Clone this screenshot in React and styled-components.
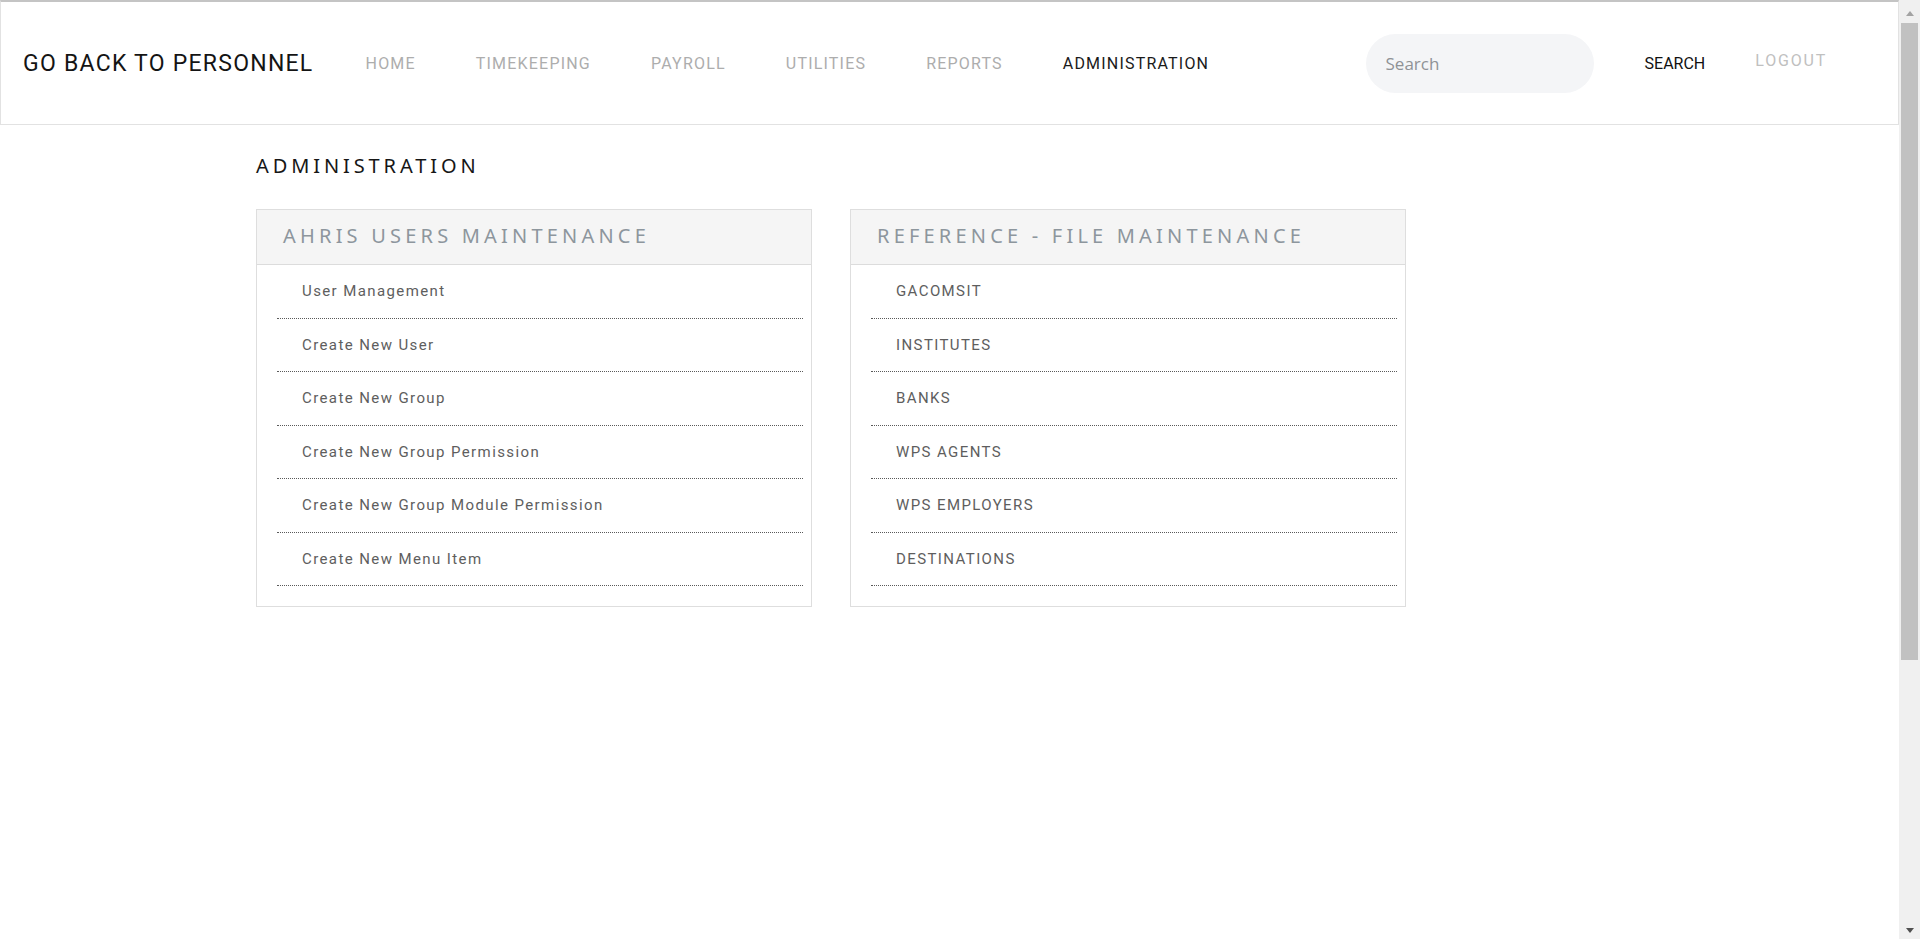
import React from "react";
import styled, { createGlobalStyle } from "styled-components";

const GlobalStyle = createGlobalStyle`
  html, body { background: #fff; }
  body {
    margin: 0;
    font-family: Roboto, "Liberation Sans", sans-serif;
    overflow: hidden;
  }
`;

const Frame = styled.div`
  display: grid;
  grid-template-columns: 1fr 21px;
  height: 100vh;
`;

const Page = styled.div`
  min-width: 0;
  overflow: hidden;
`;

/* window scrollbar drawing */
const ScrollBar = styled.div`
  display: flex;
  flex-direction: column;
  background: #f0f0f0;
`;

const ArrowButton = styled.div`
  height: ${(p) => p.$h}px;
  display: flex;
  justify-content: center;
  align-items: ${(p) => (p.$down ? "flex-end" : "flex-start")};
  padding-top: ${(p) => (p.$down ? 0 : 11)}px;
  padding-bottom: ${(p) => (p.$down ? 6 : 0)}px;
  box-sizing: border-box;
`;

const Triangle = styled.span`
  width: 0;
  height: 0;
  border-left: 4.5px solid transparent;
  border-right: 4.5px solid transparent;
  ${(p) =>
    p.$down
      ? `border-top: 5px solid ${p.$color};`
      : `border-bottom: 5px solid ${p.$color};`}
`;

const Thumb = styled.div`
  height: 637px;
  margin: 0 2px;
  background: #c1c1c1;
`;

const Track = styled.div`
  flex: 1;
`;

const Header = styled.header`
  display: flex;
  align-items: center;
  height: 122px;
  padding: 0 0 0 22px;
  border: 1px solid #e2e2e2;
  border-top: 2px solid #c4c4c4;
`;

const Brand = styled.a`
  font-size: 23px;
  letter-spacing: 1.25px;
  color: #141414;
  margin-right: 52px;
  white-space: nowrap;
`;

const Nav = styled.nav`
  display: flex;
  gap: 60px;
`;

const NavItem = styled.a`
  font-size: 16px;
  letter-spacing: 1.2px;
  color: ${(p) => (p.$active ? "#1a1a1a" : "#adadad")};
  white-space: nowrap;
`;

const SearchArea = styled.div`
  display: flex;
  align-items: center;
  margin-left: auto;
  margin-right: 71px;
`;

const SearchInput = styled.input`
  width: 228px;
  height: 59px;
  box-sizing: border-box;
  border: none;
  border-radius: 30px;
  background: #f4f5f7;
  padding: 0 20px;
  font-family: "Open Sans", "Noto Sans", sans-serif;
  font-size: 17px;
  color: #333;
  outline: none;
  &::placeholder { color: #8f9296; }
`;

const SearchButton = styled.a`
  margin-left: 51px;
  font-size: 16px;
  color: #111;
`;

const Logout = styled.a`
  margin-left: 50px;
  margin-bottom: 6px;
  font-size: 16px;
  letter-spacing: 1.8px;
  color: #c0c0c0;
`;

const Main = styled.main`
  padding: 26px 0 0 256px;
`;

const PageTitle = styled.h1`
  margin: 0 0 28px;
  font-family: "Noto Sans", sans-serif;
  font-weight: 400;
  font-size: 20px;
  line-height: 30px;
  letter-spacing: 3.9px;
  color: #161616;
`;

const Panels = styled.div`
  display: flex;
  gap: 38px;
  align-items: flex-start;
`;

const Panel = styled.section`
  width: 556px;
  box-sizing: border-box;
  border: 1px solid #dedede;
`;

const PanelHeader = styled.h2`
  margin: 0;
  height: 55px;
  box-sizing: border-box;
  display: flex;
  align-items: center;
  padding: 0 0 3px 26px;
  background: #f5f5f5;
  border-bottom: 1px solid #dcdcdc;
  font-family: "Noto Sans", sans-serif;
  font-weight: 400;
  font-size: 20px;
  letter-spacing: 4.2px;
  color: #8d969d;
`;

const PanelBody = styled.ul`
  list-style: none;
  margin: 0;
  padding: 0 8px 20px 20px;
`;

const Row = styled.li`
  height: 52.5px;
  display: flex;
  align-items: center;
  padding-left: 25px;
  border-bottom: 1px dotted #5a5a5a;
  font-size: 15px;
  letter-spacing: 1.4px;
  color: #5e5e5e;
`;

const admin = [
  "User Management",
  "Create New User",
  "Create New Group",
  "Create New Group Permission",
  "Create New Group Module Permission",
  "Create New Menu Item",
];

const refs = ["GACOMSIT", "INSTITUTES", "BANKS", "WPS AGENTS", "WPS EMPLOYERS", "DESTINATIONS"];

const navItems = ["HOME", "TIMEKEEPING", "PAYROLL", "UTILITIES", "REPORTS", "ADMINISTRATION"];

export default function App() {
  return (
    <>
      <GlobalStyle />
      <Frame>
        <Page>
          <Header>
            <Brand>GO BACK TO PERSONNEL</Brand>
            <Nav>
              {navItems.map((n) => (
                <NavItem key={n} $active={n === "ADMINISTRATION"}>
                  {n}
                </NavItem>
              ))}
            </Nav>
            <SearchArea>
              <SearchInput placeholder="Search" />
              <SearchButton>SEARCH</SearchButton>
              <Logout>LOGOUT</Logout>
            </SearchArea>
          </Header>
          <Main>
            <PageTitle>ADMINISTRATION</PageTitle>
            <Panels>
              <Panel>
                <PanelHeader>AHRIS USERS MAINTENANCE</PanelHeader>
                <PanelBody>
                  {admin.map((a) => (
                    <Row key={a}>{a}</Row>
                  ))}
                </PanelBody>
              </Panel>
              <Panel>
                <PanelHeader>REFERENCE - FILE MAINTENANCE</PanelHeader>
                <PanelBody>
                  {refs.map((a) => (
                    <Row key={a}>{a}</Row>
                  ))}
                </PanelBody>
              </Panel>
            </Panels>
          </Main>
        </Page>
        <ScrollBar aria-hidden="true">
          <ArrowButton $h={23}>
            <Triangle $color="#a3a3a3" />
          </ArrowButton>
          <Thumb />
          <Track />
          <ArrowButton $h={17} $down>
            <Triangle $down $color="#505050" />
          </ArrowButton>
        </ScrollBar>
      </Frame>
    </>
  );
}
